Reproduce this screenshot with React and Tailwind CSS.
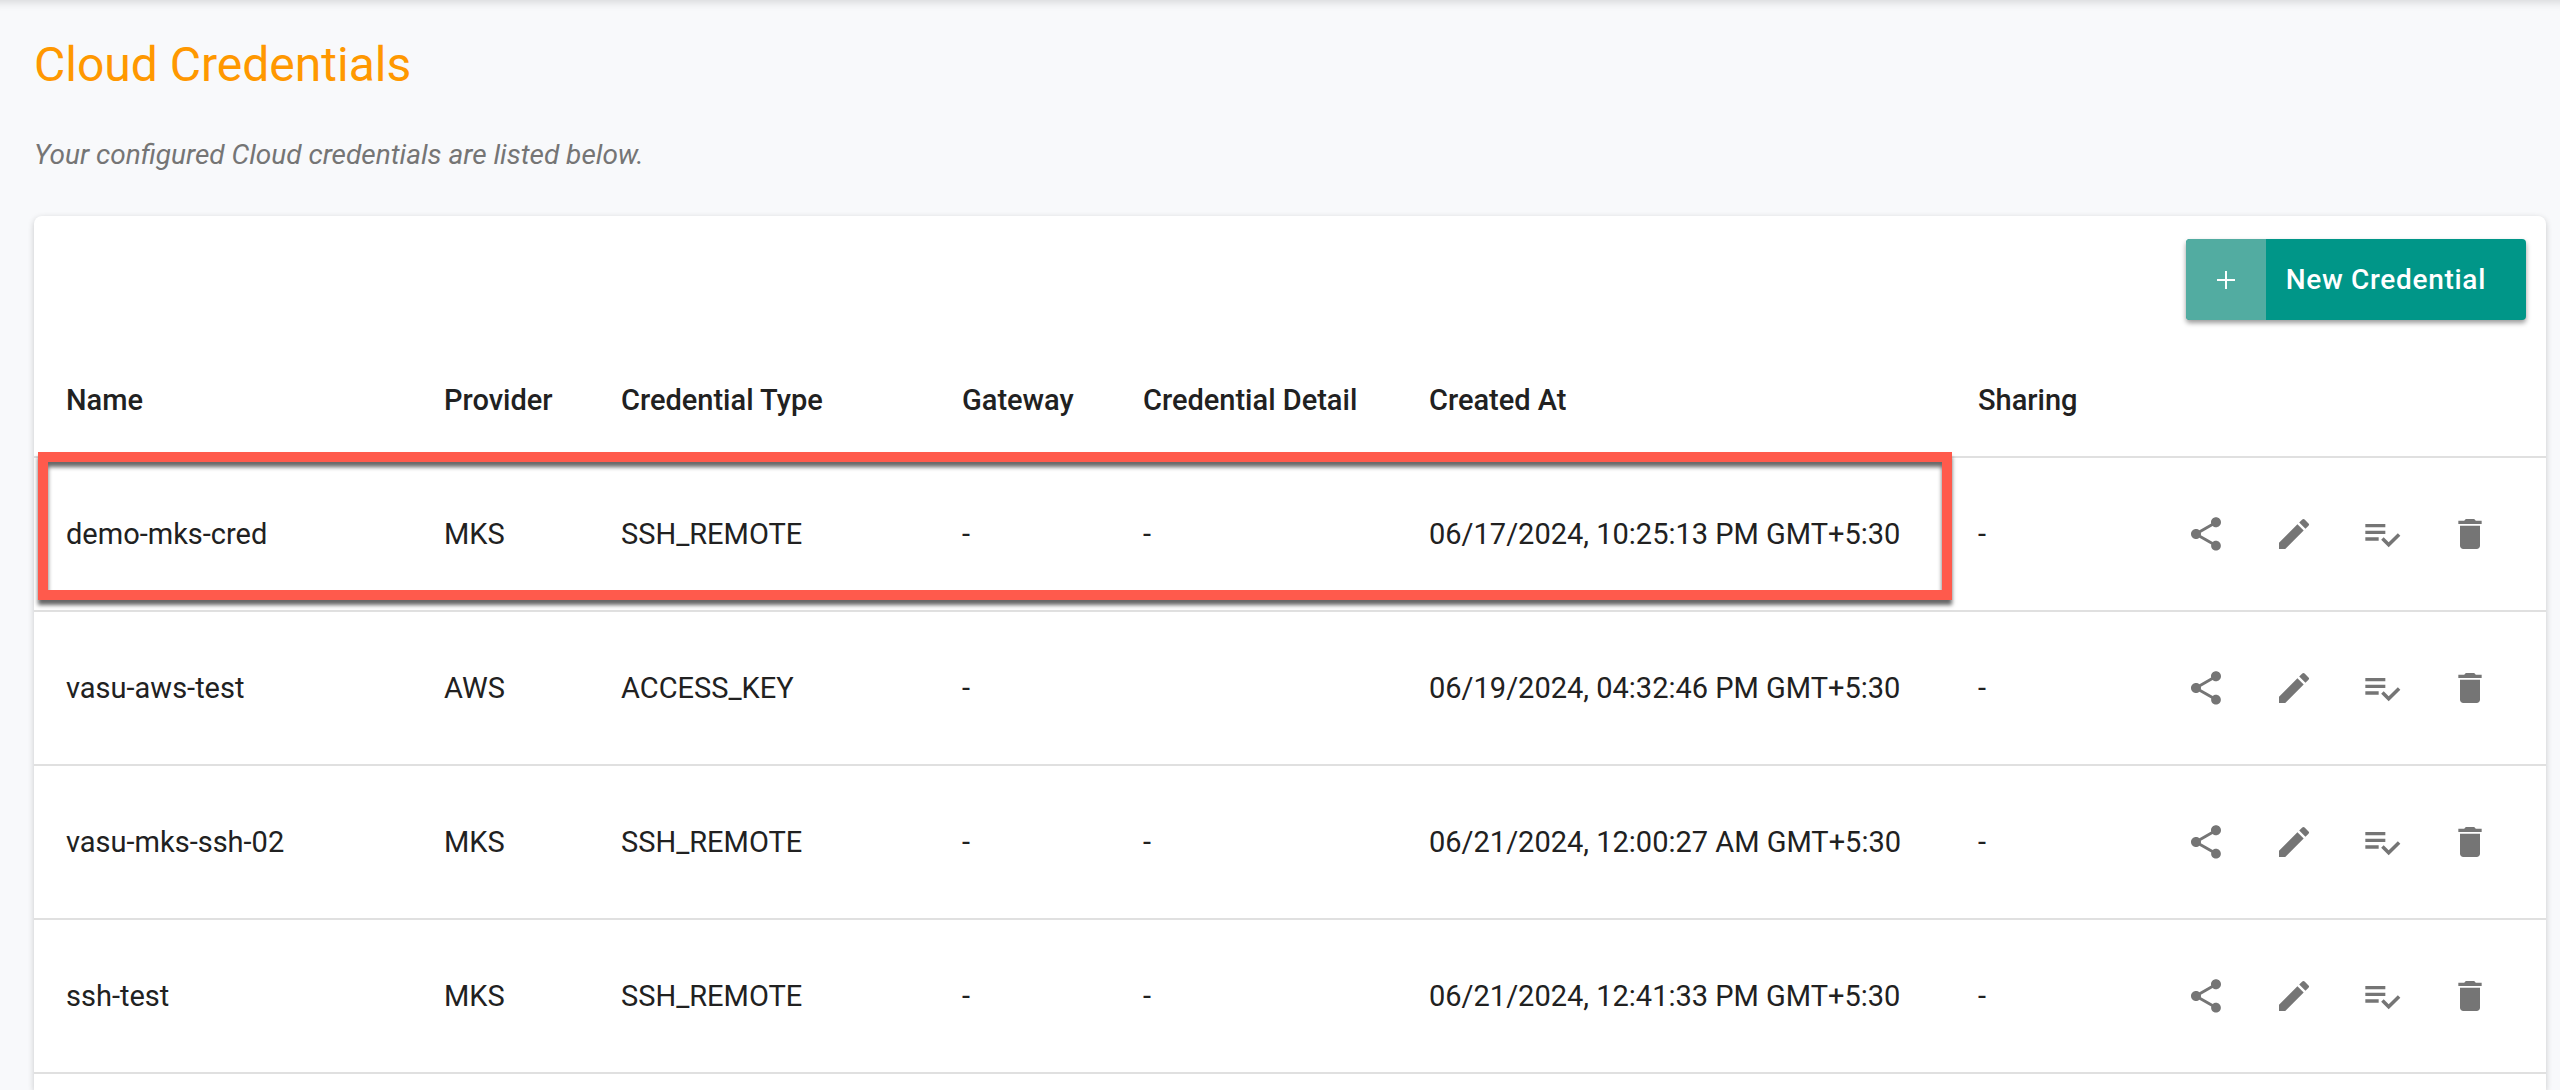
import React from "react"
import { MdDelete, MdEdit, MdShare } from "react-icons/md"

const CREDENTIALS = [
  { name: "demo-mks-cred", provider: "MKS", type: "SSH_REMOTE", gateway: "-", detail: "-", createdAt: "06/17/2024, 10:25:13 PM GMT+5:30", sharing: "-", highlighted: true },
  { name: "vasu-aws-test", provider: "AWS", type: "ACCESS_KEY", gateway: "-", detail: "", createdAt: "06/19/2024, 04:32:46 PM GMT+5:30", sharing: "-" },
  { name: "vasu-mks-ssh-02", provider: "MKS", type: "SSH_REMOTE", gateway: "-", detail: "-", createdAt: "06/21/2024, 12:00:27 AM GMT+5:30", sharing: "-" },
  { name: "ssh-test", provider: "MKS", type: "SSH_REMOTE", gateway: "-", detail: "-", createdAt: "06/21/2024, 12:41:33 PM GMT+5:30", sharing: "-" },
]

function PlaylistCheckIcon() {
  return (
    <svg viewBox="0 0 24 24" width="40" height="40" fill="currentColor" aria-hidden="true">
      <path d="M14 10H2v2h12v-2zm0-4H2v2h12V6zM2 16h8v-2H2v2zm19.5-4.5L23 13l-6.99 7-4.51-4.5L13 14l3.01 3 5.49-5.5z" />
    </svg>
  )
}

function IconButton({ label, children }) {
  return (
    <button type="button" aria-label={label} className="flex size-[88px] items-center justify-center rounded-full hover:bg-black/5">
      {children}
    </button>
  )
}

function HeaderCell({ children }) {
  return (
    <th scope="col" className="h-[116px] border-b-2 border-[#e0e0e0] pt-0.5 pl-8 text-left font-medium whitespace-nowrap">
      {children}
    </th>
  )
}

function Cell({ children }) {
  return <td className="h-[154px] border-b-2 border-[#e0e0e0] pl-8 whitespace-nowrap">{children}</td>
}

function CredentialRow({ credential }) {
  return (
    <tr className="relative">
      <Cell>
        {credential.name}
        {credential.highlighted && (
          <div className="pointer-events-none absolute -top-1.5 right-[594px] bottom-3 left-1 border-10 border-[#ff5a4c] shadow-[0_5px_4px_rgba(0,0,0,0.6),inset_0_5px_4px_rgba(0,0,0,0.6)]" />
        )}
      </Cell>
      <Cell>{credential.provider}</Cell>
      <Cell>{credential.type}</Cell>
      <Cell>{credential.gateway}</Cell>
      <Cell>{credential.detail}</Cell>
      <Cell>{credential.createdAt}</Cell>
      <Cell>{credential.sharing}</Cell>
      <td className="border-b-2 border-[#e0e0e0] pr-8">
        <div className="flex justify-end text-[#757575]">
          <IconButton label="Share"><MdShare size={40} /></IconButton>
          <IconButton label="Edit"><MdEdit size={40} /></IconButton>
          <IconButton label="Validate"><PlaylistCheckIcon /></IconButton>
          <IconButton label="Delete"><MdDelete size={40} /></IconButton>
        </div>
      </td>
    </tr>
  )
}

export default function App() {
  return (
    <main className="flex min-h-screen flex-col bg-[#f8f9fb] pr-3.5 pl-[34px] font-['Roboto',sans-serif] text-[28px] leading-8 text-[#212121] shadow-[inset_0_12px_10px_-10px_rgba(0,0,0,0.15)]">
      <h1 className="pt-[37px] text-5xl leading-14 font-normal text-[#ff9800]">Cloud Credentials</h1>
      <p className="py-[46px] pb-[45px] text-[#757575] italic">Your configured Cloud credentials are listed below.</p>

      <section className="flex-1 rounded-t-lg bg-white shadow-[0_2px_6px_rgba(0,0,0,0.2)]">
        <div className="flex justify-end pt-[23px] pr-5 pb-[22px]">
          <button type="button" className="flex h-[81px] items-stretch overflow-hidden rounded-sm bg-[#009688] font-medium text-white shadow-[0_3px_5px_rgba(0,0,0,0.4)]">
            <span className="flex w-20 items-center justify-center bg-[#52aca1]">
              <svg viewBox="0 0 18 18" width="18" height="18" stroke="currentColor" strokeWidth="2" aria-hidden="true">
                <path d="M9 0v18M0 9h18" />
              </svg>
            </span>
            <span className="flex items-center pr-10 pl-5 tracking-wide">New Credential</span>
          </button>
        </div>

        <table className="w-full table-fixed border-separate border-spacing-0 text-[29px]">
          <colgroup>
            <col />
            <col className="w-[177px]" />
            <col className="w-[341px]" />
            <col className="w-[181px]" />
            <col className="w-[286px]" />
            <col className="w-[549px]" />
            <col className="w-[216px]" />
            <col className="w-[384px]" />
          </colgroup>
          <thead>
            <tr>
              <HeaderCell>Name</HeaderCell>
              <HeaderCell>Provider</HeaderCell>
              <HeaderCell>Credential Type</HeaderCell>
              <HeaderCell>Gateway</HeaderCell>
              <HeaderCell>Credential Detail</HeaderCell>
              <HeaderCell>Created At</HeaderCell>
              <HeaderCell>Sharing</HeaderCell>
              <td className="border-b-2 border-[#e0e0e0]" />
            </tr>
          </thead>
          <tbody>
            {CREDENTIALS.map((credential) => (
              <CredentialRow key={credential.name} credential={credential} />
            ))}
          </tbody>
        </table>
      </section>
    </main>
  )
}
